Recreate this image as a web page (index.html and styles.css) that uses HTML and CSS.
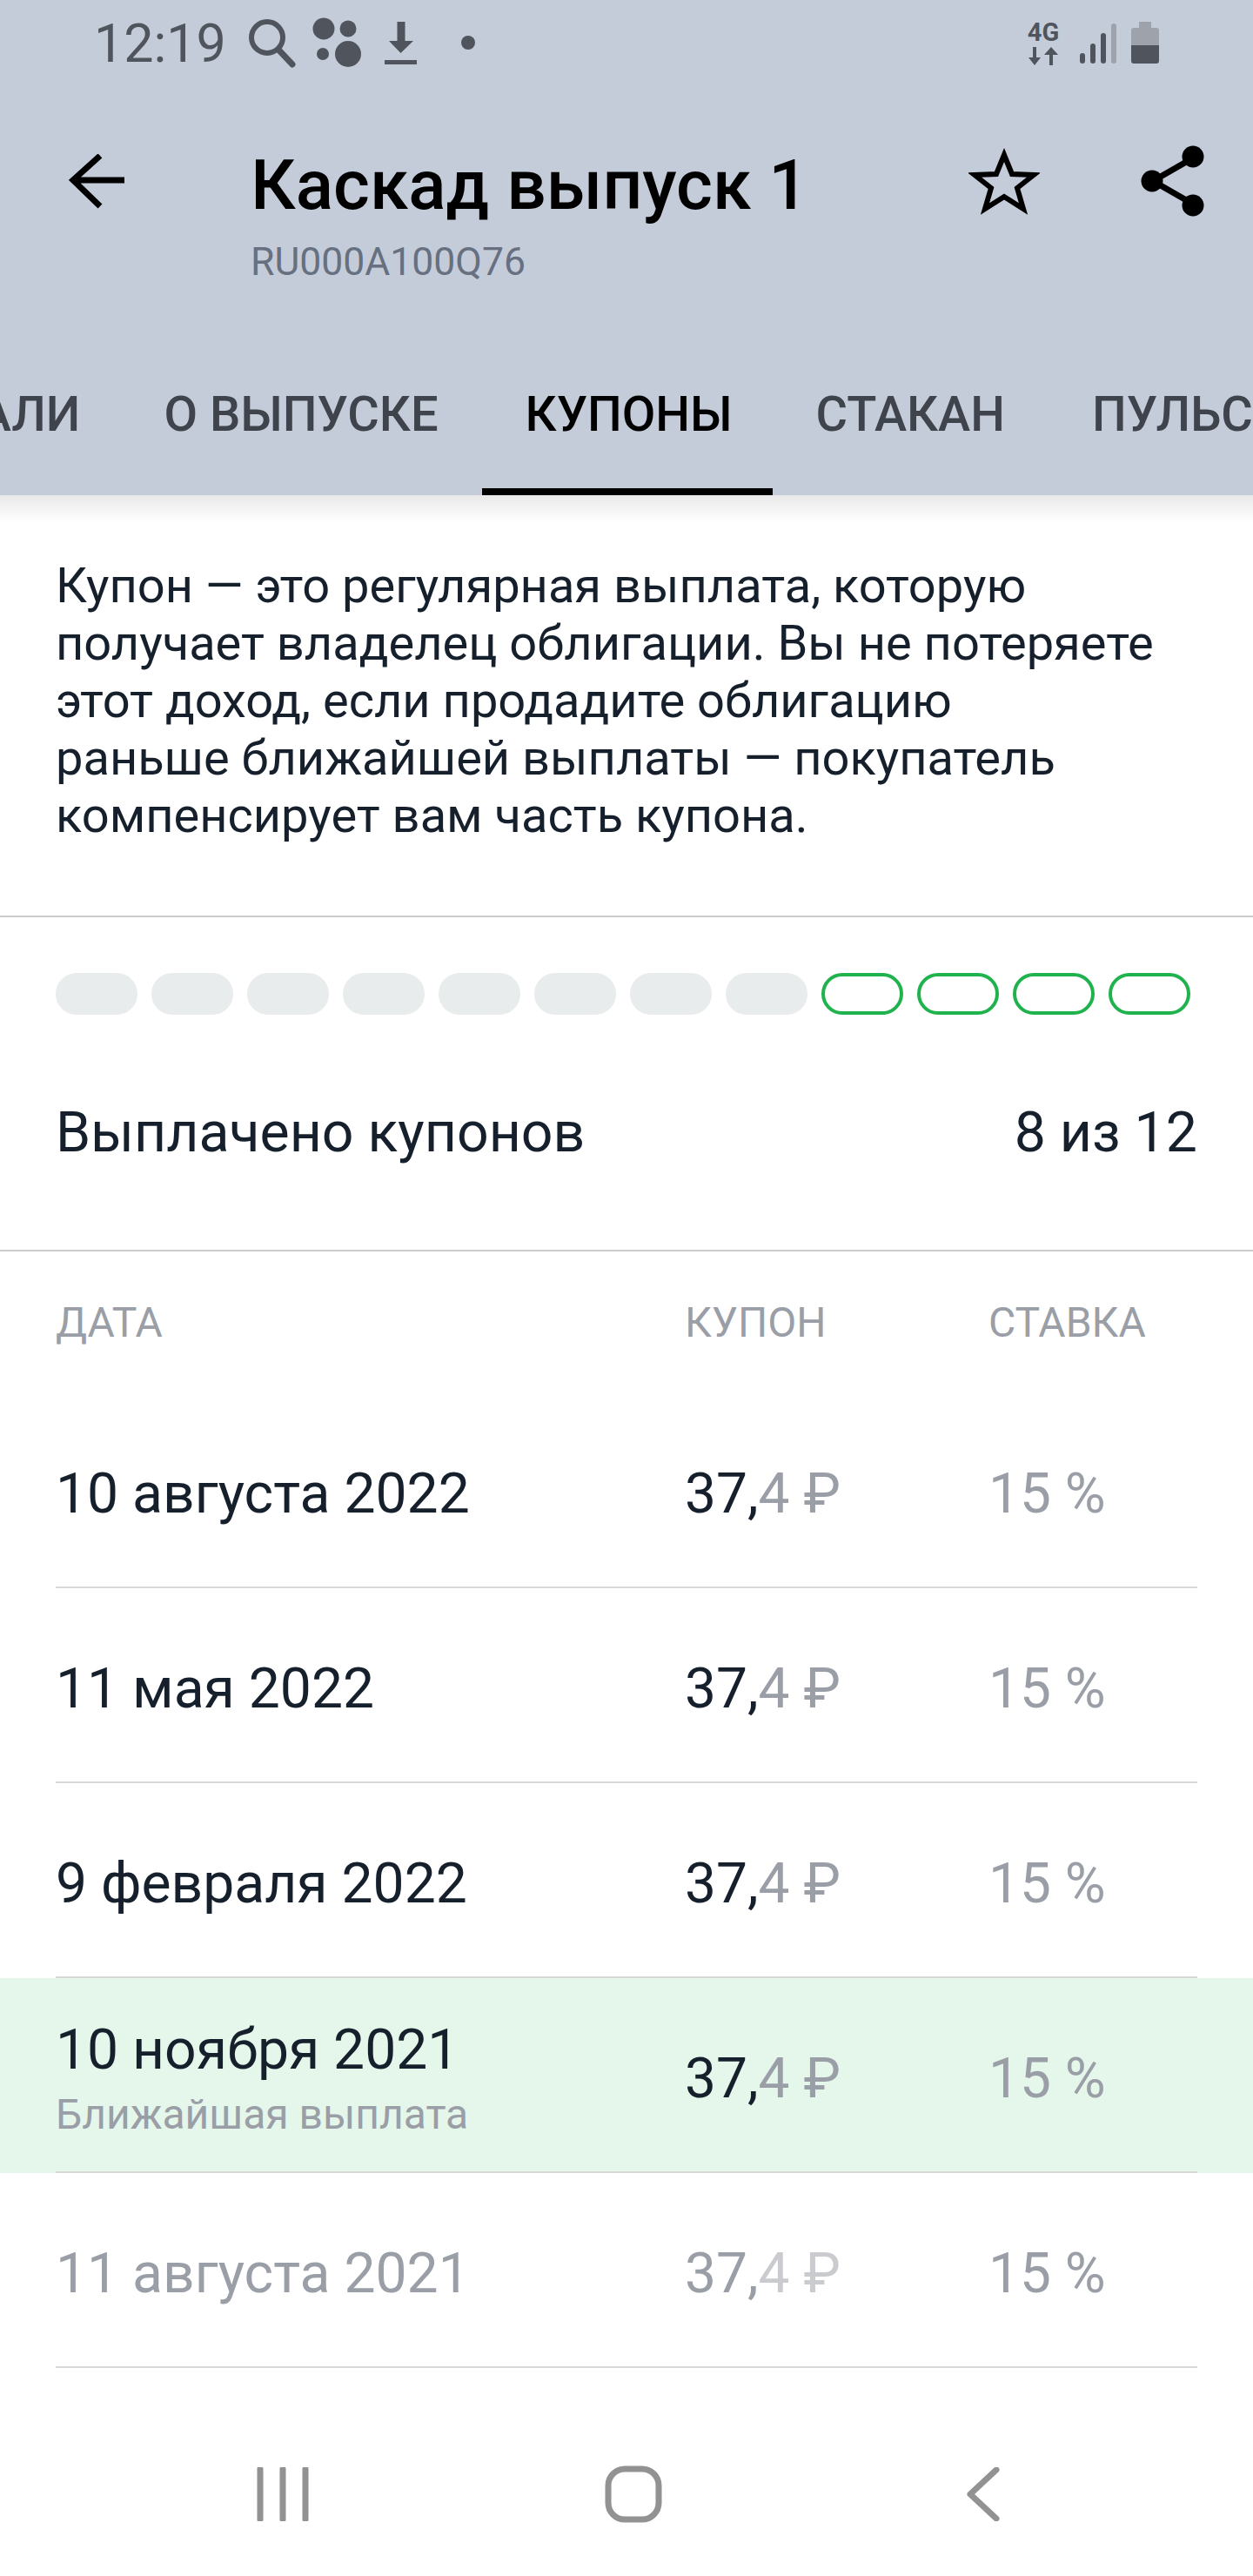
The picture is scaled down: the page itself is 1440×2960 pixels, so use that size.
FILE: index.html

```html
<!DOCTYPE html>
<html lang="ru">
<head>
  <meta charset="UTF-8" />
  <title>Каскад выпуск 1 - Купоны</title>
  <link rel="stylesheet" href="styles.css">
</head>
<body>
  <div class="screen">
    <header class="top">
      <div class="status">
        <span class="time">12:19</span>
        <svg class="st-search" width="62" height="64" viewBox="0 0 62 64">
          <circle cx="25" cy="24" r="18" fill="none" stroke="#50555d" stroke-width="6"/>
          <path d="M38 38 L54 55" stroke="#50555d" stroke-width="7" stroke-linecap="round"/>
        </svg>
        <svg class="st-dots" width="56" height="58" viewBox="0 0 56 58">
          <circle cx="13" cy="13" r="12.5" fill="#50555d"/>
          <circle cx="41" cy="13" r="9.5" fill="#50555d"/>
          <circle cx="12" cy="42" r="7" fill="#50555d"/>
          <circle cx="41" cy="42" r="15" fill="#50555d"/>
        </svg>
        <svg class="st-download" width="37" height="50" viewBox="0 0 37 50">
          <path d="M14.500 0 H23.500 V22 H33 L18.500 36 L5 22 H14.500 Z" fill="#50555d"/>
          <rect x="0" y="44" width="37" height="5" fill="#50555d"/>
        </svg>
        <span class="st-dot"></span>
        <span class="st-spacer"></span>
        <div class="net">
          <span class="net-label">4G</span>
          <svg width="38" height="22" viewBox="0 0 38 22">
            <path d="M7 0 H11 V12 H16 L9 21 L2 12 H7 Z" fill="#50555d"/>
            <path d="M26 21 H30 V9 H36 L28 0 L20 9 H26 Z" fill="#50555d"/>
          </svg>
        </div>
        <svg class="st-signal" width="42" height="46" viewBox="0 0 42 46">
          <rect x="0" y="34" width="6" height="12" rx="3" fill="#50555d"/>
          <rect x="12" y="23" width="6" height="23" rx="3" fill="#50555d"/>
          <rect x="24" y="11" width="6" height="35" rx="3" fill="#50555d"/>
          <rect x="36" y="0" width="6" height="46" rx="3" fill="#9ea3ab"/>
        </svg>
        <svg class="st-battery" width="32" height="48" viewBox="0 0 32 48">
          <path d="M9 0 H23 V7 H29 Q32 7 32 10 V27 H0 V10 Q0 7 3 7 H9 Z" fill="#9ea3ab"/>
          <path d="M0 27 H32 V45 Q32 48 29 48 H3 Q0 48 0 45 Z" fill="#50555d"/>
        </svg>
      </div>

      <div class="appbar">
        <svg class="back" width="66" height="64" viewBox="0 0 66 64">
          <path d="M64 30 H6 M36 2 L5 30 L36 60" fill="none" stroke="#000" stroke-width="7"/>
        </svg>
        <div class="titles">
          <h1>Каскад выпуск 1</h1>
          <div class="isin">RU000A100Q76</div>
        </div>
        <svg class="star" width="82" height="78" viewBox="0 0 82 78">
          <path d="M41 9 L50 31 L75 32 L56 47 L63 71 L41 57 L19 71 L26 47 L7 32 L32 31 Z" fill="none" stroke="#000" stroke-width="6"/>
        </svg>
        <svg class="share" width="74" height="82" viewBox="0 0 74 82">
          <path d="M61 14 L14 41 L61 68" fill="none" stroke="#000" stroke-width="7"/>
          <circle cx="60" cy="13" r="12.500" fill="#000"/>
          <circle cx="13" cy="41" r="12.500" fill="#000"/>
          <circle cx="60" cy="69" r="12.500" fill="#000"/>
        </svg>
      </div>

      <nav class="tabs">
        <a class="tab tab-first">ДЕТАЛИ</a>
        <a class="tab">О ВЫПУСКЕ</a>
        <a class="tab tab-active">КУПОНЫ</a>
        <a class="tab">СТАКАН</a>
        <a class="tab">ПУЛЬС</a>
      </nav>
    </header>

    <main class="content">
      <p class="intro">Купон — это регулярная выплата, которую<br>получает владелец облигации. Вы не потеряете<br>этот доход, если продадите облигацию<br>раньше ближайшей выплаты — покупатель<br>компенсирует вам часть купона.</p>

      <section class="progress">
        <div class="pills">
          <span class="pill"></span>
          <span class="pill"></span>
          <span class="pill"></span>
          <span class="pill"></span>
          <span class="pill"></span>
          <span class="pill"></span>
          <span class="pill"></span>
          <span class="pill"></span>
          <span class="pill pill-open"></span>
          <span class="pill pill-open"></span>
          <span class="pill pill-open"></span>
          <span class="pill pill-open"></span>
        </div>
        <div class="paid">
          <span>Выплачено купонов</span>
          <span>8 из 12</span>
        </div>
      </section>

      <section class="table">
        <div class="thead">
          <span>ДАТА</span>
          <span>КУПОН</span>
          <span>СТАВКА</span>
        </div>

        <div class="row">
          <div class="date">10 августа 2022</div>
          <div class="coupon">37,<span class="frac">4 ₽</span></div>
          <div class="rate">15 %</div>
        </div>
        <div class="row">
          <div class="date">11 мая 2022</div>
          <div class="coupon">37,<span class="frac">4 ₽</span></div>
          <div class="rate">15 %</div>
        </div>
        <div class="row">
          <div class="date">9 февраля 2022</div>
          <div class="coupon">37,<span class="frac">4 ₽</span></div>
          <div class="rate">15 %</div>
        </div>
        <div class="row-next">
          <div class="row">
            <div class="date">10 ноября 2021<small>Ближайшая выплата</small></div>
            <div class="coupon">37,<span class="frac">4 ₽</span></div>
            <div class="rate">15 %</div>
          </div>
        </div>
        <div class="row row-past">
          <div class="date">11 августа 2021</div>
          <div class="coupon">37,<span class="frac">4 ₽</span></div>
          <div class="rate">15 %</div>
        </div>
      </section>
    </main>

    <footer class="navbar">
      <svg width="60" height="62" viewBox="0 0 60 62">
        <path d="M4 2 V60 M30 2 V60 M56 2 V60" stroke="#929292" stroke-width="7" stroke-linecap="round"/>
      </svg>
      <svg width="66" height="66" viewBox="0 0 66 66">
        <rect x="4" y="4" width="58" height="58" rx="19" fill="none" stroke="#929292" stroke-width="7"/>
      </svg>
      <svg width="40" height="62" viewBox="0 0 40 62">
        <path d="M35 3 L5 31 L35 59" fill="none" stroke="#929292" stroke-width="7" stroke-linecap="round" stroke-linejoin="round"/>
      </svg>
    </footer>
  </div>
</body>
</html>
```

FILE: styles.css

```css
* {
  box-sizing: border-box;
}
body {
  margin: 0;
  font-family: Roboto, "Noto Sans", sans-serif;
  background-color: #fff;
  color: #16202c;
}
.screen {
  width: 1440px;
  height: 2960px;
  overflow: hidden;
  display: flex;
  flex-direction: column;
}

/* header */
.top {
  background-color: #c5ccd9;
  height: 569px;
  flex: none;
}
.status {
  height: 100px;
  display: flex;
  align-items: flex-start;
  padding: 0 108px 0 108px;
  color: #50555d;
}
.time {
  font-size: 61px;
  line-height: 50px;
  margin-top: 25px;
  width: 174px;
}
.st-search {
  margin-top: 19px;
}
.st-dots {
  margin-top: 20px;
  margin-left: 15px;
}
.st-download {
  margin-top: 25px;
  margin-left: 27px;
}
.st-dot {
  width: 16px;
  height: 16px;
  border-radius: 50%;
  background-color: #50555d;
  margin-top: 41px;
  margin-left: 51px;
}
.st-spacer {
  flex: 1;
}
.net {
  display: flex;
  flex-direction: column;
  align-items: center;
  margin-top: 20px;
  width: 38px;
}
.net-label {
  font-size: 29px;
  font-weight: 700;
  line-height: 34px;
}
.st-signal {
  margin-top: 27px;
  margin-left: 23px;
}
.st-battery {
  margin-top: 25px;
  margin-left: 17px;
}

.appbar {
  height: 252px;
  display: flex;
  align-items: flex-start;
}
.back {
  margin: 77px 0 0 79px;
  flex: none;
}
.titles {
  margin-left: 143px;
  width: 825px;
  flex: none;
}
h1 {
  margin: 0;
  font-size: 80.3px;
  font-weight: 500;
  line-height: 94px;
  margin-top: 66px;
  color: #000;
}
.isin {
  font-size: 44.5px;
  line-height: 52px;
  margin-top: 15px;
  color: #667080;
}
.star {
  margin-top: 69px;
  flex: none;
}
.share {
  margin-top: 67px;
  margin-left: 116px;
  flex: none;
}

.tabs {
  height: 217px;
  display: flex;
  margin-left: -180px;
}
.tab {
  font-size: 56px;
  font-weight: 500;
  color: #3f444c;
  height: 100%;
  padding: 30px 50px 0;
  display: flex;
  align-items: center;
  white-space: nowrap;
}
.tab-first {
  padding-right: 46px;
}
.tab-active {
  color: #000;
  padding-right: 46px;
  box-shadow: inset 0 -8px 0 #000;
}

/* content */
.content {
  flex: 1;
  background: linear-gradient(#e9e9ea, #fff 32px) no-repeat;
}
.intro {
  margin: 0;
  height: 485px;
  padding: 71px 64px 0;
  font-size: 56px;
  line-height: 66px;
  border-bottom: 2px solid #ccc;
}
.progress {
  height: 384px;
  padding: 64px 64px 0;
  border-bottom: 2px solid #ccc;
}
.pills {
  display: flex;
  gap: 16px;
}
.pill {
  width: 94px;
  height: 48px;
  border-radius: 24px;
  background-color: #e9ecec;
}
.pill-open {
  background-color: transparent;
  border: 4px solid #1fb24d;
}
.paid {
  display: flex;
  justify-content: space-between;
  font-size: 64.4px;
  line-height: 76px;
  margin-top: 97px;
}

.thead,
.row {
  display: grid;
  grid-template-columns: 723px 349px 1fr;
  align-items: center;
}
.thead {
  margin: 0 64px;
  height: 163px;
  font-size: 48px;
  color: #9a9ea6;
}
.row {
  margin: 0 64px;
  height: 224px;
  padding-top: 8px;
  font-size: 64px;
  border-bottom: 2px solid #d6d8d8;
}
.date {
  font-size: 64.2px;
}
.frac,
.rate {
  color: #9a9ea6;
}
.date small {
  display: block;
  font-size: 48px;
  line-height: 50px;
  margin-top: 12px;
  color: #9a9ea6;
}
.row-next {
  background-color: #e5f6ea;
}
.row-next .date {
  margin-top: -4px;
}
.row-past .date,
.row-past .coupon {
  color: #9a9ea6;
}
.row-past .frac {
  color: #c9cbcf;
}

/* bottom navigation */
.navbar {
  height: 240px;
  flex: none;
  display: flex;
  align-items: center;
  padding: 50px 0 0 295px;
  gap: 340px;
}
.navbar svg:nth-child(3) {
  margin-left: 9px;
}
```
